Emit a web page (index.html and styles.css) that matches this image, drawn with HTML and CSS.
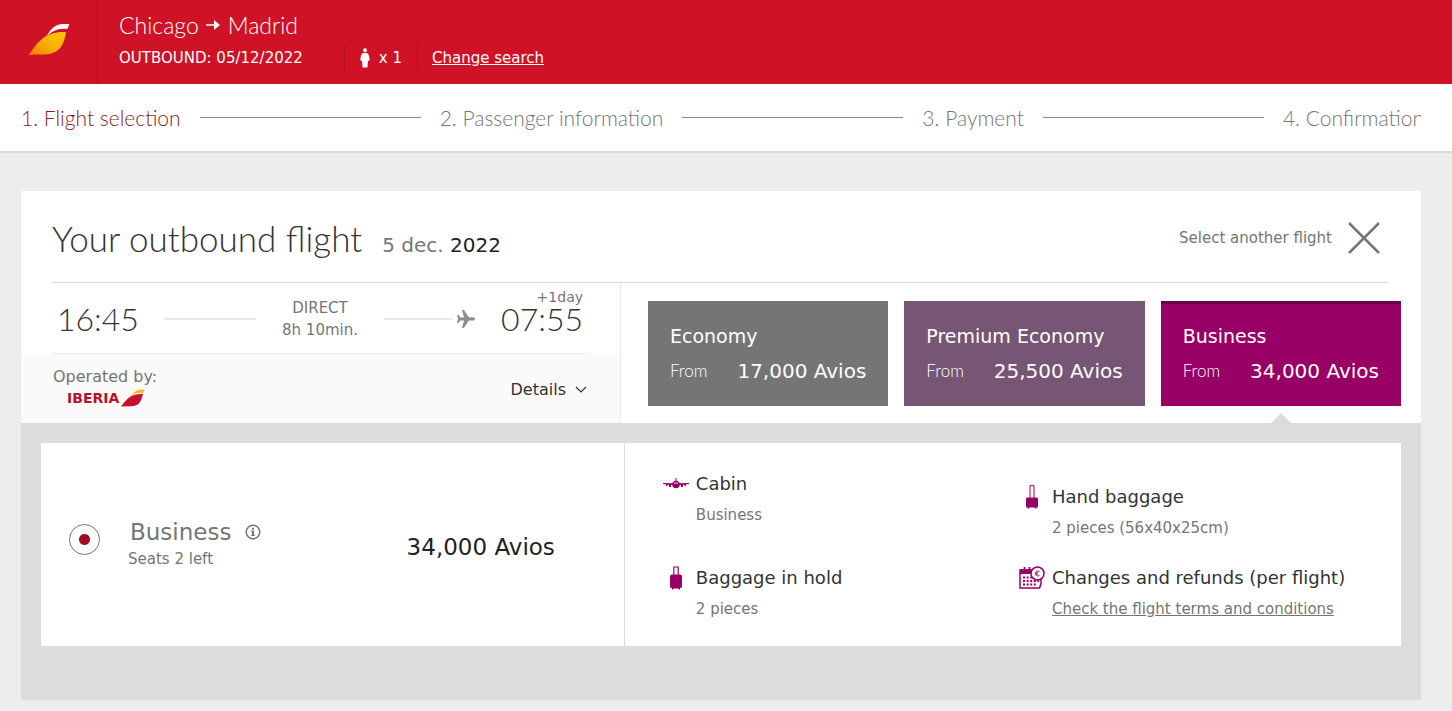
FILE: index.html
```html
<!DOCTYPE html>
<html lang="en">
<head>
    <meta charset="UTF-8">
    <meta name="viewport" content="width=device-width, initial-scale=1.0">
    <title>Iberia - Flight selection</title>
    <link rel="stylesheet" href="styles.css">
</head>
<body>
    <header class="header">
        <a class="logo" href="#" aria-label="Iberia">
            <svg width="42" height="34" viewBox="0 0 42 34">
                <defs>
                    <linearGradient id="gold" x1="0" y1="1" x2="1" y2="0">
                        <stop offset="0" stop-color="#ee7d00"/>
                        <stop offset="0.5" stop-color="#f8b200"/>
                        <stop offset="1" stop-color="#fdc800"/>
                    </linearGradient>
                </defs>
                <path d="M18 15C23 7 27 2 35 2h6c0 2-1 4-2 5-9-1-15 2-21 8z" fill="#fff"/>
                <path d="M1 33C10 19 18 9 38 10c-2 14-7 20-17 22-5 1-11 0-20 1z" fill="url(#gold)"/>
            </svg>
        </a>
        <div class="trip">
            <h1 class="route">Chicago
                <svg width="15" height="12" viewBox="0 0 15 12"><path d="M0 6h10" stroke="#fff" stroke-width="1.5"/><path d="M8 1l6 5-6 5z" fill="#fff"/></svg>
                Madrid</h1>
            <div class="trip-info">
                <span class="trip-date">OUTBOUND: 05/12/2022</span>
                <span class="passengers">
                    <svg width="10" height="20" viewBox="0 0 10 20" fill="#fff"><circle cx="5" cy="2.3" r="2"/><path d="M3 5h4c2 1 2.700 5 2.500 7 0 1-1 1-1.500 1l-.6 6.500H2.600L2 13c-.5 0-1.500 0-1.500-1C.3 10 1 6 3 5z"/></svg>
                    x 1
                </span>
                <a class="change" href="#">Change search</a>
            </div>
        </div>
    </header>

    <nav class="steps">
        <ol>
            <li class="active">1. Flight selection</li>
            <li>2. Passenger information</li>
            <li>3. Payment</li>
            <li>4. Confirmation</li>
        </ol>
    </nav>

    <main class="card">
        <div class="card-header">
            <h2>Your outbound flight</h2>
            <p class="date">5 dec. <strong>2022</strong></p>
            <button class="another" type="button">
                Select another flight
                <svg width="32" height="32" viewBox="0 0 32 32"><path d="M1 1l30 30M31 1L1 31" stroke="#757575" stroke-width="2.500"/></svg>
            </button>
        </div>

        <div class="flight">
            <section class="journey">
                <div class="schedule">
                    <time class="hour">16:45</time>
                    <span class="leg"></span>
                    <p class="duration">DIRECT<br>8h 10min.</p>
                    <span class="leg">
                        <svg width="18" height="18" viewBox="0 0 18 18"><path d="M0 5h1.500l2 2.500h3.500L5 0h1.900l5 7.300H16c1 0 2 .8 2 1.600s-1 1.600-2 1.600h-4.100l-5 7.500H5l2-7.500H3.500l-2 2.500H0L1 9z" fill="#8f8f8a"/></svg>
                    </span>
                    <time class="hour">07:55<span class="next-day">+1day</span></time>
                </div>
                <div class="operator">
                    <div>
                        <p>Operated by:</p>
                        <p class="airline">IBERIA
                            <svg width="24" height="18" viewBox="0 0 24 18"><path d="M9 8c4-5 7-8 13-7.500h1.500L22 4C17 3.500 13 4 9 8z" fill="#f3b61f"/><path d="M0 17.500C6 9 11 4.500 22 5c-2 9-5 12-12 12.300z" fill="#c8102e"/></svg>
                        </p>
                    </div>
                    <button class="details" type="button">
                        Details
                        <svg width="12" height="7" viewBox="0 0 12 7"><path d="M1 1l5 5 5-5" fill="none" stroke="#333" stroke-width="1.200"/></svg>
                    </button>
                </div>
            </section>

            <div class="fares">
                <button class="fare economy" type="button">
                    <span class="fare-name">Economy</span>
                    <span class="from">From</span>
                    <span class="price">17,000 Avios</span>
                </button>
                <button class="fare premium" type="button">
                    <span class="fare-name">Premium Economy</span>
                    <span class="from">From</span>
                    <span class="price">25,500 Avios</span>
                </button>
                <button class="fare business" type="button">
                    <span class="fare-name">Business</span>
                    <span class="from">From</span>
                    <span class="price">34,000 Avios</span>
                </button>
            </div>
        </div>

        <div class="fare-panel">
            <div class="fare-option">
                <input type="radio" id="fareBusiness" name="fare" checked>
                <label for="fareBusiness">
                    <span class="option-name">Business
                        <svg width="16" height="16" viewBox="0 0 16 16"><circle cx="8" cy="8" r="6.800" fill="none" stroke="#757575" stroke-width="1.500"/><path d="M7 3.700h2v2H7zM6.300 6.800H9v4h.8V12H6.200v-1.200H7V8h-.7z" fill="#757575"/></svg>
                    </span>
                    <span class="seats">Seats 2 left</span>
                </label>
                <span class="option-price">34,000 Avios</span>
            </div>

            <div class="features">
                <div class="feature-col">
                    <div class="feature">
                        <svg width="26" height="12" viewBox="0 0 26 12" fill="#990066"><path d="M12.500 0h1v4h-1z"/><path d="M0 5l9 .3h8L26 5v1l-9 1.200H9L0 6z"/><circle cx="13" cy="6.500" r="3.700"/><path d="M3 6h1.500v2H3zM6 6h2v3H6zM18 6h2v3h-2zM21.500 6H23v2h-1.500z"/><path d="M11 5h4" stroke="#fff" stroke-width=".8"/></svg>
                        <h3>Cabin</h3>
                        <p>Business</p>
                    </div>
                    <div class="feature">
                        <svg width="14" height="24" viewBox="0 0 14 24" fill="#990066"><path d="M4.800 10V1h4.400v9" fill="none" stroke="#990066" stroke-width="1.200"/><path d="M3 8.500h8c1.500 0 2 1 2 2.500v9c0 1-.5 2-2 2v1.500H9.500V22.500h-5v1H3V22c-1.500 0-2-1-2-2v-9c0-1.500.5-2.500 2-2.500z"/></svg>
                        <h3>Baggage in hold</h3>
                        <p>2 pieces</p>
                    </div>
                </div>
                <div class="feature-col">
                    <div class="feature">
                        <svg width="14" height="24" viewBox="0 0 14 24" fill="#990066"><path d="M5 13V.7h4V13" fill="none" stroke="#990066"/><path d="M2.500 12.500h9c1 0 1.500.5 1.500 1.500v7c0 1-.5 1.500-1.500 1.500v1h-1.700v-1H4.200v1H2.500v-1C1.500 22.500 1 22 1 21v-7c0-1 .5-1.500 1.500-1.500z"/></svg>
                        <h3>Hand baggage</h3>
                        <p>2 pieces (56x40x25cm)</p>
                    </div>
                    <div class="feature">
                        <svg width="26" height="24" viewBox="0 0 26 24"><path d="M1 4h21v14l-1.500 4H1z" fill="#fff" stroke="#990066" stroke-width="1.500"/><path d="M1 3.500h13V8H1z" fill="#990066"/><path d="M5.500 1v4M10.500 1v4" stroke="#990066" stroke-width="1.800"/><path d="M4 11.500h14M4 15h16M4 18.500h13" stroke="#990066" stroke-width="2" stroke-dasharray="2 1.600"/><circle cx="18.500" cy="7.500" r="6.500" fill="#fff" stroke="#990066" stroke-width="1.500"/><path d="M20.500 5.500c-2.500-1.300-3.600.2-3.600 2s1.100 3.300 3.600 2M15.800 6.900h3.400M15.800 8.300h3" fill="none" stroke="#990066" stroke-width=".9"/></svg>
                        <h3>Changes and refunds (per flight)</h3>
                        <p><a href="#">Check the flight terms and conditions</a></p>
                    </div>
                </div>
            </div>
        </div>
    </main>
</body>
</html>
```
FILE: styles.css
```css
* {
    margin: 0;
    padding: 0;
    box-sizing: border-box;
}

body {
    font-family: Verdana, 'DejaVu Sans', sans-serif;
    font-size: 15px;
    line-height: 22px;
    background: #ededed;
    color: #757575;
}

button {
    font: inherit;
    color: inherit;
    border: none;
    background: none;
    cursor: pointer;
}

svg {
    flex: none;
}

/* header */
.header {
    display: flex;
    height: 84px;
    background: #cf1225;
    color: white;
}

.logo {
    display: flex;
    align-items: center;
    width: 98px;
    padding: 0 0 6px 28px;
    border-right: 1px solid #b00f20;
}

.trip {
    padding: 9px 0 0 21px;
}

.route {
    display: flex;
    align-items: center;
    gap: 7px;
    font-family: Lato, sans-serif;
    font-size: 23px;
    font-weight: 300;
    line-height: 32px;
}

.trip-info {
    display: flex;
    align-items: center;
    margin-top: 4px;
    line-height: 26px;
}

.trip-date {
    margin-right: 41px;
}

.passengers {
    display: flex;
    align-items: center;
    gap: 9px;
    padding: 0 15px;
    border: 1px solid #b00f20;
    border-width: 0 1px;
}

.change {
    margin-left: 14px;
    color: white;
}

/* steps */
.steps {
    padding: 0 31px 0 21px;
    background: white;
    border-bottom: 2px solid #dadada;
}

.steps ol {
    display: flex;
    list-style: none;
    overflow: hidden;
    font-family: Lato, sans-serif;
    font-size: 21px;
    font-weight: 300;
    line-height: 67px;
    white-space: nowrap;
}

.steps li {
    display: flex;
    flex: 1 1 auto;
    align-items: center;
}

.steps li:last-child {
    flex: none;
    margin-right: -3px;
}

.steps li:not(:last-child)::after {
    content: '';
    flex: 1;
    height: 1px;
    margin: 0 19px;
    background: #8a8a8a;
}

.steps .active {
    color: #8b1a1f;
}

/* flight card */
.card {
    margin: 38px 31px 11px 21px;
    background: white;
}

.card-header {
    display: flex;
    align-items: baseline;
    margin: 0 32px 0 31px;
    padding: 18px 9px 15px 0;
    border-bottom: 1px solid #dadada;
}

.card-header h2 {
    font-family: Lato, sans-serif;
    font-size: 35px;
    font-weight: 300;
    line-height: 58px;
    color: #333;
}

.date {
    margin-left: 20px;
    font-size: 20px;
}

.date strong {
    font-weight: normal;
    color: #222;
}

.another {
    display: flex;
    align-items: center;
    align-self: center;
    gap: 16px;
    margin-left: auto;
}

.flight {
    display: grid;
    grid-template-columns: 3fr 4fr;
}

.journey {
    display: flex;
    flex-direction: column;
    border-right: 1px solid #ececec;
}

.schedule {
    display: flex;
    align-items: center;
    height: 71px;
    margin: 0 33px 0 31px;
    padding: 1px 4px 0 5px;
    border-bottom: 1px solid #ececec;
}

.hour {
    position: relative;
    font-family: Lato, sans-serif;
    font-size: 32px;
    font-weight: 300;
    line-height: 24px;
    color: #333;
}

.next-day {
    position: absolute;
    right: 0;
    bottom: 26px;
    font-family: Verdana, 'DejaVu Sans', sans-serif;
    font-size: 14px;
    font-weight: normal;
    line-height: 16px;
    color: #757575;
}

.leg {
    display: flex;
    flex: 1;
    align-items: center;
    gap: 4px;
    margin: 0 26px;
}

.leg::before {
    content: '';
    flex: 1;
    height: 2px;
    background: #e8e8e8;
}

.duration {
    text-align: center;
}

.operator {
    display: flex;
    flex: 1;
    align-items: center;
    justify-content: space-between;
    padding: 0 33px 4px 32px;
    background: #fafafa;
    font-size: 16px;
}

.airline {
    display: flex;
    align-items: center;
    gap: 2px;
    margin-left: 14px;
    font-size: 14px;
    font-weight: bold;
    line-height: 20px;
    color: #b8102a;
}

.details {
    display: flex;
    align-items: center;
    gap: 9px;
    padding-top: 6px;
    color: #333;
}

.fares {
    display: grid;
    grid-template-columns: repeat(3, 1fr);
    gap: 16px;
    padding: 18px 20px 17px 27px;
}

.fare {
    position: relative;
    display: grid;
    grid-template-columns: auto 1fr;
    align-content: center;
    align-items: center;
    row-gap: 11px;
    height: 105px;
    padding: 0 22px;
    color: white;
    text-align: left;
}

.fare-name {
    grid-column: 1 / 3;
    font-size: 19px;
    line-height: 24px;
}

.from {
    font-family: Lato, sans-serif;
    font-size: 17px;
    font-weight: 300;
}

.price {
    justify-self: end;
    font-size: 20px;
    line-height: 24px;
}

.economy {
    background: #757575;
}

.premium {
    background: #775574;
}

.business {
    background: #990066;
    box-shadow: inset 0 3px #6b0048;
}

/* pointer to the open fare panel */
.business::after {
    content: '';
    position: absolute;
    left: 50%;
    bottom: -17px;
    margin-left: -10px;
    border: 10px solid transparent;
    border-top: none;
    border-bottom-color: #dcdcdc;
}

.fare-panel {
    display: grid;
    grid-template-columns: 3fr 4fr;
    padding: 20px 20px 54px;
    background: #dcdcdc;
}

.fare-option {
    display: flex;
    align-items: center;
    padding: 0 69px 0 28px;
    background: white;
}

.fare-option input {
    appearance: none;
    width: 31px;
    height: 31px;
    margin: 0 28px 10px 0;
    border: 1px solid #757575;
    border-radius: 50%;
    background: radial-gradient(circle, #a30d1d 5px, white 6px);
}

.fare-option label {
    margin-bottom: 3px;
}

.option-name {
    display: flex;
    align-items: center;
    gap: 14px;
    padding-left: 2px;
    font-size: 23px;
    line-height: 32px;
}

.option-price {
    margin-left: auto;
    padding-top: 4px;
    font-size: 23px;
    color: #222;
}

.features {
    display: grid;
    grid-template-columns: 1fr 1fr;
    padding: 29px 26px 26px 38px;
    background: white;
    border-left: 1px solid #dcdcdc;
}

.feature-col {
    display: flex;
    flex-direction: column;
    justify-content: flex-end;
    gap: 27px;
}

.feature-col:first-child {
    gap: 40px;
}

.feature {
    display: grid;
    grid-template-columns: 26px auto;
    align-items: center;
    justify-content: start;
    gap: 8px 7px;
    white-space: nowrap;
}

.feature svg {
    justify-self: center;
}

.feature h3 {
    font-size: 18px;
    font-weight: normal;
    line-height: 24px;
    color: #333;
}

.feature p {
    grid-column: 2;
}

.feature a {
    color: inherit;
}
```
